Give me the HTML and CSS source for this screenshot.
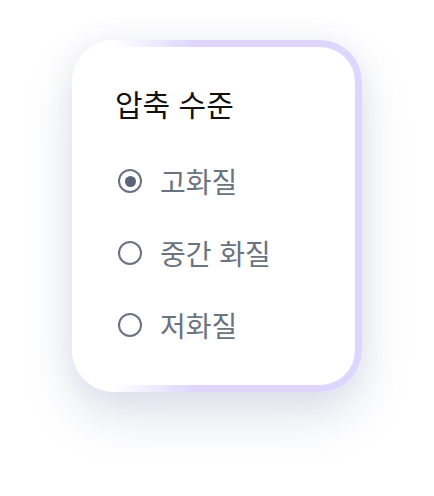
FILE: index.html
```html
<!DOCTYPE html>
<html lang="ko">
<head>
  <meta charset="UTF-8">
  <meta name="viewport" content="width=device-width, initial-scale=1.0">
  <title>압축 수준</title>
  <link rel="stylesheet" href="styles.css">
</head>
<body>
  <div class="card">
    <h2 class="title">압축 수준</h2>
    <div class="options">
      <label class="option">
        <input type="radio" name="quality" value="high" checked>
        <span class="radio"></span>
        <span class="label">고화질</span>
      </label>
      <label class="option">
        <input type="radio" name="quality" value="medium">
        <span class="radio"></span>
        <span class="label">중간 화질</span>
      </label>
      <label class="option">
        <input type="radio" name="quality" value="low">
        <span class="radio"></span>
        <span class="label">저화질</span>
      </label>
    </div>
  </div>
</body>
</html>
```

FILE: styles.css
```css
body {
  margin: 0;
  padding: 40px 0 0;
  min-height: 100vh;
  box-sizing: border-box;
  display: flex;
  align-items: flex-start;
  justify-content: center;
  background-color: #ffffff;
  font-family: "Noto Sans CJK KR", "Noto Sans", sans-serif;
}

.card {
  width: 290px;
  height: 352px;
  box-sizing: border-box;
  border: 7px solid transparent;
  border-radius: 42px;
  background:
    linear-gradient(#ffffff, #ffffff) padding-box,
    linear-gradient(90deg, #ffffff 14%, #ddd6fe 42%) border-box;
  box-shadow: 0 24px 50px rgba(96, 108, 160, 0.2), 0 0 28px rgba(96, 108, 160, 0.08);
  padding: 38px 36px 0 36px;
}

.title {
  margin: 0;
  font-size: 30px;
  line-height: 36px;
  font-weight: 400;
  color: #111111;
}

.options {
  display: flex;
  flex-direction: column;
  margin-top: 24px;
  padding-left: 3px;
}

.option {
  display: flex;
  align-items: center;
  gap: 18px;
  height: 72px;
  cursor: pointer;
}

.option input {
  display: none;
}

.radio {
  width: 24px;
  height: 24px;
  box-sizing: border-box;
  border: 2.5px solid #6b7280;
  border-radius: 50%;
  display: flex;
  align-items: center;
  justify-content: center;
}

.option input:checked + .radio::after {
  content: "";
  width: 11px;
  height: 11px;
  border-radius: 50%;
  background-color: #5b6376;
}

.label {
  font-size: 28px;
  line-height: 36px;
  color: #6b7280;
}
```
